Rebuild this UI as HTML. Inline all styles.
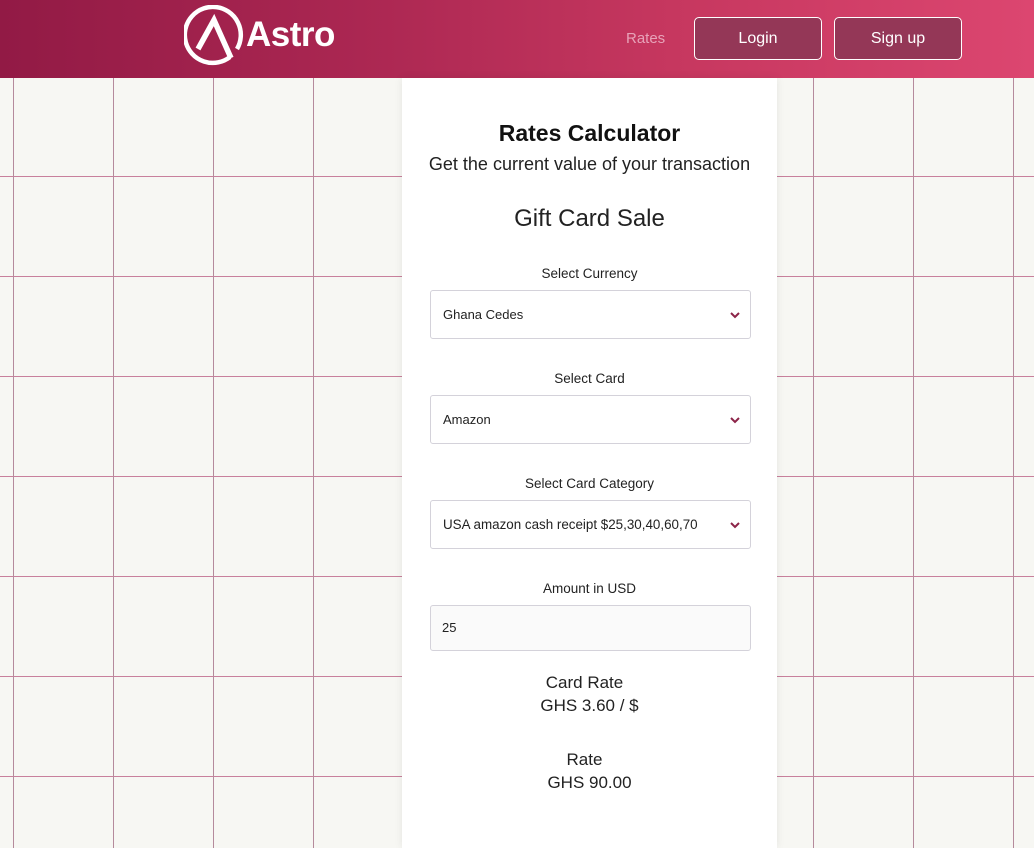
<!DOCTYPE html>
<html><head><meta charset="utf-8"><style>
*{box-sizing:border-box;margin:0;padding:0}
body{width:1034px;height:838px;overflow:hidden;font-family:"Liberation Sans",sans-serif;position:relative;
background-color:#f7f7f3;
background-image:linear-gradient(to right,#b58a9c 1px,transparent 1px),linear-gradient(to bottom,#c8809c 1px,transparent 1px);
background-size:100px 100px;background-position:13px 76px}
.hdr{position:absolute;left:0;top:0;width:1034px;height:78px;background:linear-gradient(90deg,#921a45 0%,#ab2752 35%,#c6375f 65%,#dc4670 100%)}
.abs{position:absolute}
.btn{position:absolute;top:17px;width:128px;height:43px;border:1px solid #fff;border-radius:5px;background:#943757;color:#fff;font-size:16px;text-align:center;line-height:41px}
.card{position:absolute;left:402px;top:78px;width:375px;height:770px;background:#fff;box-shadow:0 0 8px rgba(0,0,0,.08)}
.c{position:absolute;left:0;width:375px;text-align:center;color:#222}
.lbl{font-size:13.5px}
.sel{position:absolute;left:28px;width:321px;height:49px;border:1px solid #d4d2da;border-radius:3px;font-size:13px;color:#222;padding-left:12px;line-height:47px}
.sel svg{position:absolute;right:10px;top:21px}
</style></head><body>
<div class="hdr">
<svg class="abs" style="left:184px;top:5px" width="62" height="62" viewBox="0 0 62 62">
<path d="M46 52 A28 28 0 1 1 53 44" fill="none" stroke="#fff" stroke-width="4.5"/>
<path d="M14 44 L30 15 L47 53" fill="none" stroke="#fff" stroke-width="5.5" stroke-linejoin="miter"/>
</svg>
<div class="abs" style="left:246px;top:15px;color:#fff;font-weight:bold;font-size:35px;letter-spacing:-0.5px">Astro</div>
<div class="abs" style="left:626px;top:30px;color:#e7a2b8;font-size:15px">Rates</div>
<div class="btn" style="left:694px">Login</div>
<div class="btn" style="left:834px">Sign up</div>
</div>
<div class="card">
<div class="c" style="top:42px;font-size:23px;font-weight:bold;color:#111">Rates Calculator</div>
<div class="c" style="top:76px;font-size:18px">Get the current value of your transaction</div>
<div class="c" style="top:127px;font-size:24px">Gift Card Sale</div>
<div class="c lbl" style="top:188px">Select Currency</div>
<div class="sel" style="top:212px">Ghana Cedes<svg width="10" height="7"><path d="M1 1 L5 5 L9 1" fill="none" stroke="#8c2448" stroke-width="2"/></svg></div>
<div class="c lbl" style="top:293px">Select Card</div>
<div class="sel" style="top:317px">Amazon<svg width="10" height="7"><path d="M1 1 L5 5 L9 1" fill="none" stroke="#8c2448" stroke-width="2"/></svg></div>
<div class="c lbl" style="top:398px">Select Card Category</div>
<div class="sel" style="top:422px;font-size:13.4px">USA amazon cash receipt $25,30,40,60,70<svg width="10" height="7"><path d="M1 1 L5 5 L9 1" fill="none" stroke="#8c2448" stroke-width="2"/></svg></div>
<div class="c lbl" style="top:503px">Amount in USD</div>
<div class="sel" style="top:527px;height:46px;line-height:44px;background:#fafafa;padding-left:11px">25</div>
<div class="c" style="top:595px;font-size:17px;left:-5px">Card Rate</div>
<div class="c" style="top:618px;font-size:17px">GHS 3.60 / $</div>
<div class="c" style="top:672px;font-size:17px;left:-5px">Rate</div>
<div class="c" style="top:695px;font-size:17px">GHS 90.00</div>
</div>
</body></html>
